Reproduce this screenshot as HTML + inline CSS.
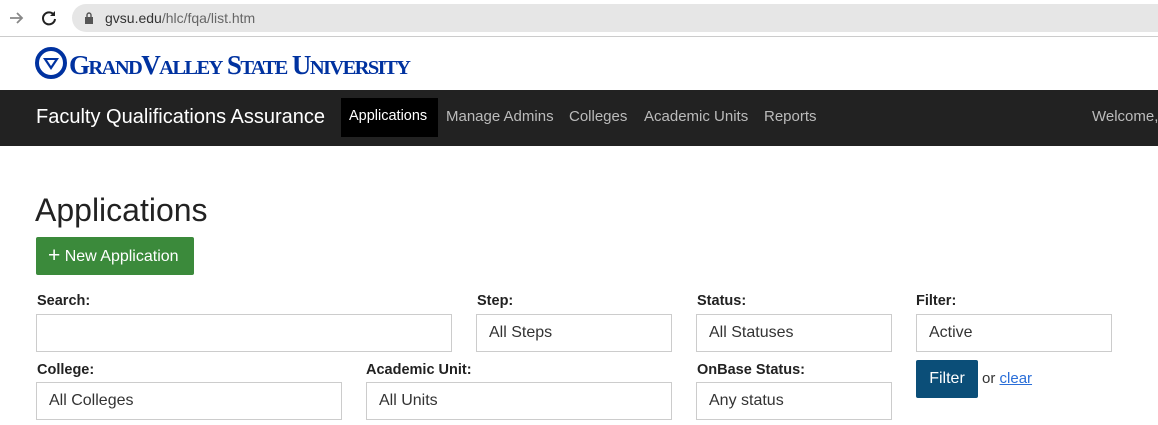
<!DOCTYPE html><html><head><style>
body{margin:0;width:1158px;height:425px;overflow:hidden;background:#fff;font-family:"Liberation Sans",Arial,sans-serif;position:relative}
.a{position:absolute}
.lbl{font-weight:bold;font-size:14.5px;color:#222}
.in{border:1px solid #ccc;box-sizing:border-box;height:38px;font-size:16px;color:#333;padding:9px 12px}
.nav{font-size:15px;color:#bbb;top:108px}
</style></head><body>
<div class="a" style="left:0;top:0;width:1158px;height:36px;background:#fff;border-bottom:1px solid #ccc"></div>
<svg class="a" style="left:8px;top:9px" width="18" height="18" viewBox="0 0 18 18"><path d="M2 9h12M9 4l5 5-5 5" stroke="#888" stroke-width="1.8" fill="none"/></svg>
<svg class="a" style="left:40px;top:9px" width="18" height="18" viewBox="0 0 18 18"><path d="M14 6A6 6 0 1 0 15 10" stroke="#222" stroke-width="2" fill="none"/><path d="M15 2v5h-5z" fill="#222"/></svg>
<div class="a" style="left:72px;top:4px;width:1100px;height:28px;border-radius:14px;background:#e6e6e6"></div>
<svg class="a" style="left:84px;top:12px" width="10" height="12" viewBox="0 0 10 12"><rect x="1" y="5" width="8" height="7" fill="#555"/><path d="M3 5V3a2 2 0 0 1 4 0v2" stroke="#555" stroke-width="1.4" fill="none"/></svg>
<div class="a" style="left:105px;top:10px;font-size:14px;color:#333">gvsu.edu<span style="color:#666">/hlc/fqa/list.htm</span></div>
<svg class="a" style="left:35px;top:47px" width="32" height="32" viewBox="0 0 32 32"><circle cx="16" cy="16" r="14" fill="none" stroke="#0032a0" stroke-width="4"/><path d="M8 11h16l-8 12z" fill="#0032a0"/><path d="M12 13h8l-4 6z" fill="#fff"/></svg>
<div class="a" style="left:69px;top:50px;font-family:'Liberation Serif',serif;font-weight:bold;color:#0032a0;font-size:27px;letter-spacing:-1.6px;line-height:30px">G<span style="font-size:20.5px">RAND</span>V<span style="font-size:20.5px">ALLEY</span> S<span style="font-size:20.5px">TATE</span> U<span style="font-size:20.5px">NIVERSITY</span></div>
<div class="a" style="left:0;top:90px;width:1158px;height:56px;background:#222"></div>
<div class="a" style="left:36px;top:106px;font-size:20px;color:#fff">Faculty Qualifications Assurance</div>
<div class="a" style="left:341px;top:98px;width:97px;height:39px;background:#000"></div>
<div class="a nav" style="left:349px;color:#fff;font-size:14.5px">Applications</div>
<div class="a nav" style="left:446px">Manage Admins</div>
<div class="a nav" style="left:569px">Colleges</div>
<div class="a nav" style="left:644px">Academic Units</div>
<div class="a nav" style="left:764px">Reports</div>
<div class="a nav" style="left:1092px;white-space:nowrap">Welcome,</div>
<div class="a" style="left:35px;top:192px;font-size:32px;color:#222">Applications</div>
<div class="a" style="left:36px;top:237px;width:158px;height:38px;background:#3b8a3b;border-radius:2px;color:#fff;font-size:16px;line-height:38px;text-indent:12px"><span style="font-size:21px;vertical-align:-1px">+</span> New Application</div>
<div class="a lbl" style="left:37px;top:293px">Search:</div>
<div class="a lbl" style="left:477px;top:293px">Step:</div>
<div class="a lbl" style="left:697px;top:293px">Status:</div>
<div class="a lbl" style="left:916px;top:293px">Filter:</div>
<div class="a in" style="left:36px;top:314px;width:416px"></div>
<div class="a in" style="left:476px;top:314px;width:196px">All Steps</div>
<div class="a in" style="left:696px;top:314px;width:196px">All Statuses</div>
<div class="a in" style="left:916px;top:314px;width:196px">Active</div>
<div class="a lbl" style="left:37px;top:362px">College:</div>
<div class="a lbl" style="left:366px;top:362px">Academic Unit:</div>
<div class="a lbl" style="left:697px;top:362px">OnBase Status:</div>
<div class="a in" style="left:36px;top:382px;width:306px">All Colleges</div>
<div class="a in" style="left:366px;top:382px;width:306px">All Units</div>
<div class="a in" style="left:696px;top:382px;width:196px">Any status</div>
<div class="a" style="left:916px;top:360px;width:62px;height:38px;background:#0b4e78;border-radius:2px;color:#fff;font-size:16px;line-height:38px;text-align:center">Filter</div>
<div class="a" style="left:982px;top:370px;font-size:15px;color:#333">or <span style="color:#2a6ed8;text-decoration:underline">clear</span></div>
</body></html>
